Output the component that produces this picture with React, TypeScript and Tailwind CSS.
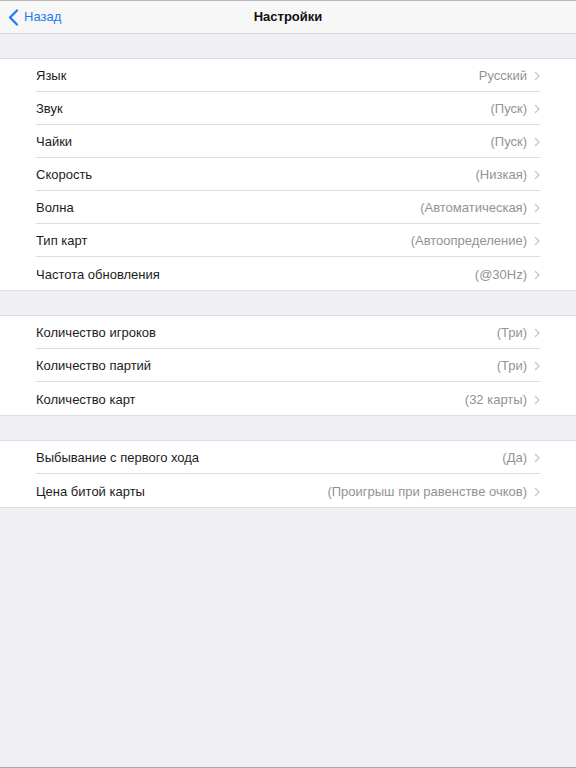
type Row = { label: string; value: string };

const groups: Row[][] = [
  [
    { label: "Язык", value: "Русский" },
    { label: "Звук", value: "(Пуск)" },
    { label: "Чайки", value: "(Пуск)" },
    { label: "Скорость", value: "(Низкая)" },
    { label: "Волна", value: "(Автоматическая)" },
    { label: "Тип карт", value: "(Автоопределение)" },
    { label: "Частота обновления", value: "(@30Hz)" },
  ],
  [
    { label: "Количество игроков", value: "(Три)" },
    { label: "Количество партий", value: "(Три)" },
    { label: "Количество карт", value: "(32 карты)" },
  ],
  [
    { label: "Выбывание с первого хода", value: "(Да)" },
    { label: "Цена битой карты", value: "(Проигрыш при равенстве очков)" },
  ],
];

function Chevron() {
  return (
    <svg width="6" height="10" viewBox="0 0 6 10" className="ml-[7px] shrink-0">
      <path d="M1 1l4 4-4 4" fill="none" stroke="#c7c7cc" strokeWidth="1.3" />
    </svg>
  );
}

function BackArrow() {
  return (
    <svg width="11" height="17" viewBox="0 0 11 17" className="mr-[5px]">
      <path d="M9 1.5L2 8.5l7 7" fill="none" stroke="#1a7cf5" strokeWidth="2.2" strokeLinecap="round" strokeLinejoin="round" />
    </svg>
  );
}

export default function App() {
  return (
    <div
      className="flex h-[768px] w-[576px] flex-col border-b border-[#a9a9ae] bg-[#efeff4] text-[13px]"
      style={{ fontFamily: '"Liberation Sans", Arial, sans-serif' }}
    >
      <header className="relative flex h-[34px] shrink-0 items-center justify-center border-t border-b border-t-[#b8b8b8] border-b-[#d6d6da] bg-[#f7f7f7]">
        <button className="absolute left-[8px] top-0 flex h-full items-center text-[13px] text-[#1a7cf5]">
          <BackArrow />
          Назад
        </button>
        <h1 className="font-bold text-[#111]">Настройки</h1>
      </header>

      {groups.map((rows, gi) => (
        <section key={gi} className="mt-[24px] border-y border-[#dcdce0] bg-white pl-[36px]">
          {rows.map((row, ri) => (
            <div
              key={row.label}
              className={
                "mr-[36px] flex h-[33px] items-center justify-between pt-[2px]" +
                (ri < rows.length - 1 ? " border-b border-[#dedee2]" : "")
              }
            >
              <span className="text-[#1c1c1c]">{row.label}</span>
              <span className="flex items-center text-[#929297]">
                {row.value}
                <Chevron />
              </span>
            </div>
          ))}
        </section>
      ))}
    </div>
  );
}
